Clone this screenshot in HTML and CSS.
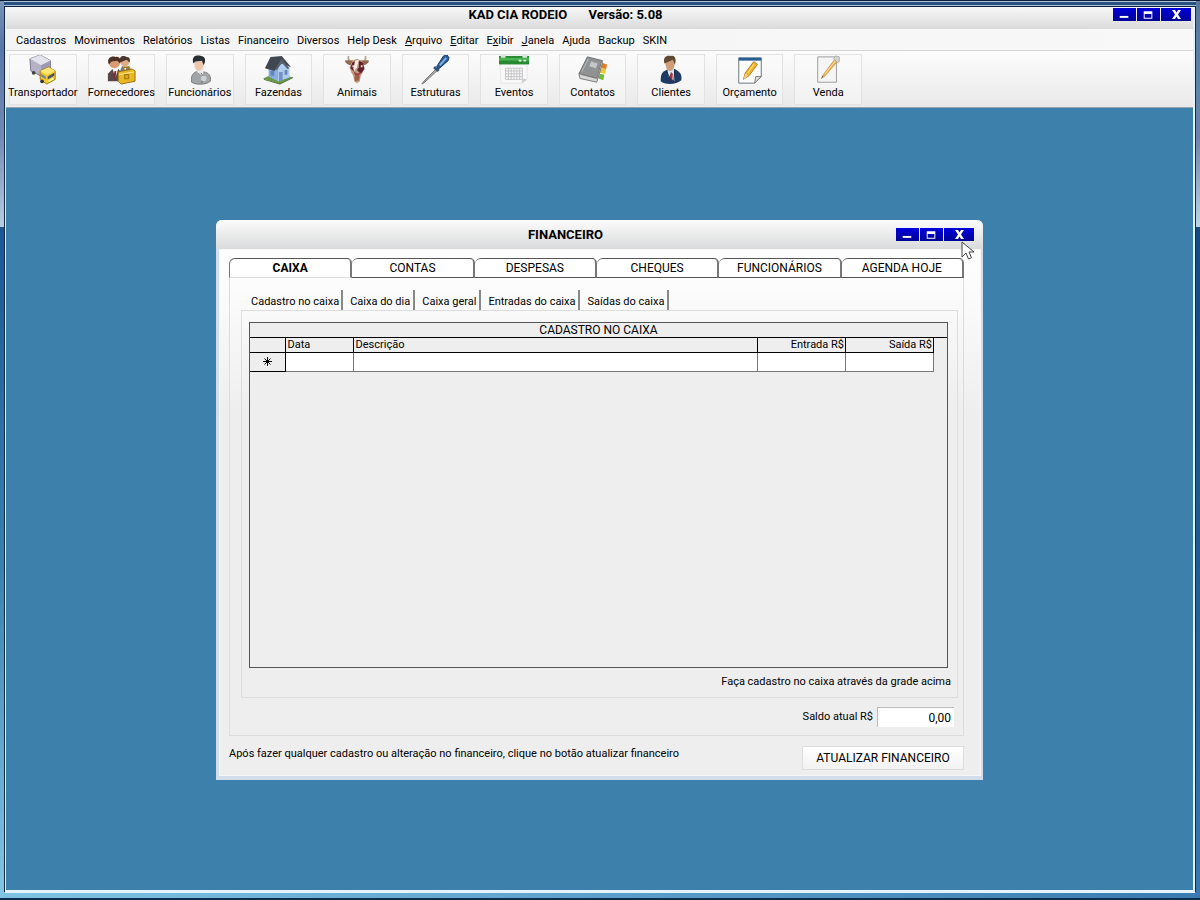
FILE: index.html
```html
<!DOCTYPE html>
<html lang="pt-BR">
<head>
<meta charset="utf-8">
<title>KAD CIA RODEIO</title>
<link rel="stylesheet" href="styles.css">
</head>
<body>
<div class="frame">
<div class="app">
  <header class="titlebar">
    <h1 class="title">KAD CIA RODEIO <span class="version">Versão: 5.08</span></h1>
    <div class="controls">
      <button class="ctl" aria-label="Minimizar"><svg viewBox="0 0 24 13"><path d="M7 8h9v2H7z"/></svg></button>
      <button class="ctl" aria-label="Maximizar"><svg viewBox="0 0 24 13"><path d="M7 3h9v8H7zM8 6v4h7V6z" fill-rule="evenodd"/></svg></button>
      <button class="ctl close" aria-label="Fechar"><svg viewBox="0 0 30 13"><path d="M11 2h3l1.500 2.500L17 2h3l-3 4.500 3 4.500h-3l-1.500-2.500L14 11h-3l3-4.500z"/></svg></button>
    </div>
  </header>
  <nav class="menu">
    <button>Cadastros</button><button>Movimentos</button><button>Relatórios</button><button>Listas</button><button>Financeiro</button><button>Diversos</button><button>Help Desk</button><button><u>A</u>rquivo</button><button><u>E</u>ditar</button><button>E<u>x</u>ibir</button><button><u>J</u>anela</button><button>Ajuda</button><button>Backup</button><button>SKIN</button>
  </nav>
  <div class="tools">
    <div class="toolgrid">
      <button class="tool"><svg viewBox="0 0 32 32"><path d="M2 4 13 0l11 6v12l-9 5L3 17z" fill="#b4b3c6" stroke="#77748a"/><path d="m2 4 11-4 11 6-10 5z" fill="#e2e2ed"/><path d="m14 11 10-5v11l-10 6z" fill="#9a99b0"/><path d="m13 17 9-4 7 4v9l-9 5-7-5z" fill="#f6cb2b" stroke="#9c7309"/><path d="m13 17 9-4 7 4-9 4z" fill="#ffe777"/><path d="m21 23 7-4v3l-7 4z" fill="#465270"/><path d="m14 20 5 3v3l-5-3z" fill="#7888a0"/><circle cx="6" cy="19" r="2" fill="#444"/><circle cx="15" cy="28" r="2" fill="#333"/><path d="m22 28 5-3" stroke="#fff4b0" stroke-width="2"/></svg>Transportador</button>
      <button class="tool"><svg viewBox="0 0 32 32"><circle cx="9" cy="8" r="6" fill="#d99b74"/><path d="M3 10C0 2 7 1 10 2c6-1 6 5 5 7l-3-3-6 1z" fill="#4e3024"/><path d="M2 28v-8l5-5h6l4 4v9z" fill="#58484a"/><path d="m7 15 3 9 3-9z" fill="#fff"/><path d="m9 17-1 7 2 2 1-9z" fill="#8c2530"/><circle cx="20" cy="7" r="5" fill="#e1ac86"/><path d="M15 8C13 1 19 0 22 2c4 0 4 4 3 6l-3-3z" fill="#4b352c"/><path d="m15 17 2-5h7l4 5z" fill="#777"/><path d="m18 12 2 5 3-5z" fill="#fff"/><path d="m13 18 15-3 3 2v11l-15 3-3-3z" fill="#e8b924" stroke="#95700d"/><path d="m14 21 16-3" stroke="#fff099"/><path d="M19 16v-3h6v2M20 21h4v4h-4z" fill="none" stroke="#ac7d0d" stroke-width="1.500"/></svg>Fornecedores</button>
      <button class="tool"><svg viewBox="0 0 32 32"><path d="M7 29c-1-8 2-10 7-12l6 1c6 1 8 5 7 10-4 4-16 4-20 1z" fill="#a2a5a8" stroke="#777"/><path d="M13 14h7l-1 8-6-4z" fill="#eee"/><ellipse cx="15" cy="10" rx="5" ry="7" fill="#ebc8ae"/><path d="M9 9C6 0 14 0 17 1c4 0 6 4 3 10l-2-5-7 1z" fill="#292e32"/><path d="m17 19 2 3-1 8" stroke="#666" fill="none"/><circle cx="20" cy="25" r="3" fill="#ccd0d3"/></svg>Funcionários</button>
      <button class="tool"><svg viewBox="0 0 32 32"><path d="m0 25 14-6 18 5-14 7z" fill="#6c9949"/><path d="m6 14 10-9 12 8v11l-12 4-10-5z" fill="#89aee0"/><path d="M16 14v14l12-4V13l-7-7z" fill="#b0cdef"/><path d="M2 14 8 2l12-1 10 12-10-4-6 6-2 2z" fill="#414751"/><path d="m13 15 7-11 8 10-2 1-6-7-5 8z" fill="#5a626e"/><path d="M8 17h4v5H8zM23 16h3v5h-3z" fill="#6485b8"/><path d="M17 18h4v9l-4 1z" fill="#7592c2"/><path d="m1 26 17 5 14-7" fill="none" stroke="#456e2b"/></svg>Fazendas</button>
      <button class="tool"><svg viewBox="0 0 32 32"><path d="M12 6C8 7 6 5 7 1M20 6c4 1 6-1 5-5" fill="none" stroke="#b9a888" stroke-width="2"/><path d="M3 6c3-1 6 0 9 1l-1 4c-4 0-7-2-8-5zM29 6c-3-1-6 0-9 1l1 4c4 0 7-2 8-5z" fill="#94694f"/><path d="m11 6 5-2 5 2 3 7-2 6-2 3-1 6-3 2-3-2-1-6-2-3-2-6z" fill="#c09a80"/><path d="m11 8 4-2v7l-3 4-3-3zM18 6l4 2 2 7-4 5-4-4 2-3z" fill="#64202a"/><path d="m14 6 4-1-2 8-3 4-1-2z" fill="#f4ece3"/><path d="m12 17 4 3 4-2-2 4h-4z" fill="#a03a3a"/><path d="m13 23 6-1-1 5-4 1z" fill="#996044"/><path d="M11 11h2v2h-2zM20 11h2v2h-2z" fill="#f0d8c8"/></svg>Animais</button>
      <button class="tool"><svg viewBox="0 0 32 32"><path d="m2 31 2-3L17 15l2 1L4 30z" fill="#aaa" stroke="#777"/><path d="m18 12 7-11 4-1 2 3-1 3-9 8-2 1z" fill="#2a5c9d" stroke="#173b70"/><path d="m21 11 7-8" stroke="#80b1e3" stroke-width="2"/><path d="m15 13 5 4" stroke="#3b5372" stroke-width="3"/></svg>Estruturas</button>
      <button class="tool"><svg viewBox="0 0 32 32"><path d="M1 10h29v16l-5 4H2z" fill="#f8f8f8" stroke="#e6e6e6"/><path d="M0 1h32v9H0z" fill="#278a30"/><path d="M0 3h32v3H0z" fill="#4ab353"/><path d="M2 0h5v3H2zM25 0h5v3h-5z" fill="#dbe9db"/><path d="M21 5h3v2h-3zM26 5h3v2h-3z" fill="#d9f5da"/><path d="M7 14h18v12H7zM10 14v12M13 14v12M16 14v12M19 14v12M22 14v12M7 17h18M7 20h18M7 23h18" fill="none" stroke="#c4c4c8"/><path d="m24 30 1-5 5 1z" fill="#ccc"/></svg>Eventos</button>
      <button class="tool"><svg viewBox="0 0 32 32"><path d="m25 8 6 2-1 5-5-1z" fill="#e27c25"/><path d="m24 14 6 1-1 5-6-1z" fill="#e9c936"/><path d="m23 20 5 1-1 6-5-2z" fill="#70ba38"/><path d="m10 2 16 4-5 19L1 20z" fill="#909293" stroke="#65696d"/><path d="m1 20 1 5 18 4 6-20-1-2-5 18z" fill="#d5d5d5" stroke="#777"/><path d="m14 7 7 2-2 5-7-2z" fill="#c5c8ca"/><path d="m4 18 7-14" stroke="#b8bbbc"/></svg>Contatos</button>
      <button class="tool"><svg viewBox="0 0 32 32"><path d="M5 28c0-9 2-10 8-13h7c5 3 8 5 7 12-5 5-18 5-22 1z" fill="#1e3b65"/><path d="m12 14 7 1 1 13-7-5z" fill="#dce6ef"/><ellipse cx="15" cy="9" rx="5" ry="8" fill="#cf9d78"/><path d="M9 9C7 1 12 0 16 1c5-1 6 5 4 9l-2-5z" fill="#5f4932"/><path d="m16 18 2 2-1 10-3-6z" fill="#a23342"/><path d="m11 17 6 12M20 17l-1 11" stroke="#102646"/></svg>Clientes</button>
      <button class="tool"><svg viewBox="0 0 32 32"><path d="M4 3h24v20l-7 7H4z" fill="#fcfcfa" stroke="#66717e"/><path d="M4 3h24v3H4z" fill="#275e96"/><path d="m9 26 2-7 9-12 4 3-9 12z" fill="#efb534" stroke="#b77c1e"/><path d="m9 26 2-6 3 2z" fill="#ead1a6"/><path d="m14 19 6-9" stroke="#ffec86"/><path d="m21 30 1-7h6z" fill="#ddd" stroke="#777"/></svg>Orçamento</button>
      <button class="tool"><svg viewBox="0 0 32 32"><path d="M5 2h20v27H5z" fill="#f5f5f5" stroke="#999"/><path d="m9 25 2-4L23 5l3 2-13 15z" fill="#edb85c" stroke="#cf9443"/><path d="m13 20 11-14" stroke="#ffe29e"/><path d="m22 4 2-3 4 1v5l-2 1z" fill="#d5d5d5" stroke="#aaa"/><path d="m9 25 1-3 1 1z" fill="#555"/></svg>Venda</button>
    </div>
  </div>
  <main class="desktop">
    <section class="window" aria-labelledby="win-title">
      <header class="wintitle">
        <h2 class="title" id="win-title">FINANCEIRO</h2>
        <div class="controls">
          <button class="ctl" aria-label="Minimizar"><svg viewBox="0 0 24 13"><path d="M7 8h9v2H7z"/></svg></button>
          <button class="ctl" aria-label="Maximizar"><svg viewBox="0 0 24 13"><path d="M7 3h9v8H7zM8 6v4h7V6z" fill-rule="evenodd"/></svg></button>
          <button class="ctl close" aria-label="Fechar"><svg viewBox="0 0 30 13"><path d="M11 2h3l1.500 2.500L17 2h3l-3 4.500 3 4.500h-3l-1.500-2.500L14 11h-3l3-4.500z"/></svg></button>
        </div>
      </header>
      <div class="winbody">
        <div class="tabs" role="tablist">
          <button class="tab active" role="tab" aria-selected="true">CAIXA</button><button class="tab" role="tab">CONTAS</button><button class="tab" role="tab">DESPESAS</button><button class="tab" role="tab">CHEQUES</button><button class="tab" role="tab">FUNCIONÁRIOS</button><button class="tab" role="tab">AGENDA HOJE</button>
        </div>
        <div class="panel">
          <div class="subtabs" role="tablist">
            <button class="subtab current" role="tab" aria-selected="true">Cadastro no caixa</button><button class="subtab" role="tab">Caixa do dia</button><button class="subtab" role="tab">Caixa geral</button><button class="subtab" role="tab">Entradas do caixa</button><button class="subtab" role="tab">Saídas do caixa</button>
          </div>
          <div class="subpanel">
            <div class="datagrid">
              <table>
                <colgroup><col class="c-mark"><col class="c-date"><col><col class="c-money"><col class="c-money"></colgroup>
                <caption>CADASTRO NO CAIXA</caption>
                <thead><tr><th></th><th>Data</th><th>Descrição</th><th class="num">Entrada R$</th><th class="num">Saída R$</th></tr></thead>
                <tbody><tr><td class="mark"><svg viewBox="0 0 9 9"><path d="M4.500 0v9M0 4.500h9M1.500 1.500l6 6M7.500 1.500l-6 6"/></svg></td><td></td><td></td><td></td><td></td></tr></tbody>
              </table>
            </div>
            <p class="hint">Faça cadastro no caixa através da grade acima</p>
          </div>
          <div class="balance">
            <label for="saldo">Saldo atual R$</label>
            <input id="saldo" type="text" value="0,00">
          </div>
        </div>
        <footer class="winfoot">
          <p>Após fazer qualquer cadastro ou alteração no financeiro, clique no botão atualizar financeiro</p>
          <button class="update">ATUALIZAR FINANCEIRO</button>
        </footer>
      </div>
      <svg class="cursor" viewBox="0 0 14 20"><path d="M1 1v15l4-4 2.500 6 3-1.200L8 11h5z" fill="#fff" stroke="#444"/></svg>
    </section>
  </main>
</div>
</div>
</body>
</html>
```
FILE: styles.css
```css
* { box-sizing: border-box; }
body {
  margin: 0;
  color: #000;
  font: 11px/14px Roboto, sans-serif;
}
button { padding: 0; border: 0; background: none; color: inherit; font: inherit; white-space: nowrap; }
p, h1, h2 { margin: 0; }

.frame {
  display: flex;
  min-height: 100vh;
  padding: 6px 5px 5px;
  border-top: 1px solid #0a1c36;
  border-bottom: 2px solid #0b2d4b;
  background:
    linear-gradient(#7a93b8, #5b77a5 20%, #7289b4 60%, #b9cde2) left top / 4px 226px no-repeat,
    linear-gradient(#59779c, #5d86a8 40%, #7080ac 60%, #bcd6e4) right top / 4px 226px no-repeat,
    linear-gradient(#1c5794, #3a7fb0 50%, #85c5e4) left bottom / 4px calc(100% - 226px) no-repeat,
    linear-gradient(#144a80, #205c96 50%, #3978b2) right bottom / 4px calc(100% - 226px) no-repeat,
    linear-gradient(#b2c7de 0 1px, #29517f 1px 4px, #a9c0d8 4px 5px, #0d2344 5px) top / 100% 6px no-repeat,
    linear-gradient(90deg, #7fc3e4, #3a7bb0) bottom / 100% 6px no-repeat,
    #102b4d;
}
.app { display: flex; flex: 1; flex-direction: column; border: solid #e4f4fa; border-width: 0 2px 3px 1px; }

.titlebar, .wintitle { display: flex; align-items: flex-start; justify-content: center; position: relative; }
.titlebar { height: 22px; background: linear-gradient(#f8f8f8, #dadada); }
.title { padding-right: 68px; font: bold 13px/15px Roboto, sans-serif; }
.version { margin-left: 18px; }
.controls { position: absolute; right: 2px; top: 1px; display: flex; gap: 1px; }
.ctl { width: 23px; height: 13px; background: linear-gradient(#0000dc, #000096); }
.ctl.close { width: 30px; }
.ctl svg { display: block; width: 100%; height: 13px; fill: #fff; }

.menu { display: flex; gap: 8px; padding: 5px 10px 2px; background: linear-gradient(90deg, #f4f4f4, #f8f8f8); border-bottom: 1px solid #d4d4d4; }
.tools { padding: 3px 4px 2px 3px; background: linear-gradient(#fcfcfc, #e9e9ea); border-bottom: 1px solid #96a3ab; }
.toolgrid { display: grid; grid-template-columns: repeat(11, minmax(0, 1fr)); gap: 11px; max-width: 853px; }
.tool { display: flex; flex-direction: column; align-items: center; gap: 1px; height: 51px; border: 1px solid #e2e2e2; background: linear-gradient(#fbfbfb, #f1f1f1); }
.tool svg { flex: none; width: 30px; height: 30px; }

.desktop { position: relative; flex: 1; min-height: 680px; background: #3d80ab; }
.window {
  position: absolute;
  left: 210px;
  top: 112px;
  width: 767px;
  border-radius: 6px 6px 0 0;
  background: linear-gradient(#fff, #fcfcfc 12%, #eee 35%);
  border: solid #d2dcea;
  border-width: 0 2px 4px 3px;
}
.wintitle { height: 29px; margin: 0 -2px 0 -3px; padding-top: 7px; border-radius: 6px 6px 0 0; background: linear-gradient(#fcfcfc, #d9dadb); }
.wintitle .controls { right: 9px; top: 8px; }
.winbody { padding: 8px 16px 5px 9px; border: 1px solid #f6f6f6; }

.tabs { display: flex; }
.tab { flex: 1; height: 20px; border: 1px solid #555; border-right: 2px solid #777; border-left: 0; border-radius: 6px 5px 0 0; padding-top: 1px; background: #fff; font: 12px/17px Roboto, sans-serif; }
.tab.active { border-left: 1px solid #777; border-bottom-color: #ddd; font-weight: bold; }
.panel { padding: 12px 5px 8px 11px; border: 1px solid #dcdcdf; border-top: 0; }
.subtabs { display: flex; padding-left: 3px; }
.subtab { height: 20px; padding: 3px 3px 0 7px; border-right: 2px solid #888; }
.subtab.current { padding-right: 2px; }
.subpanel { padding: 11px 9px 8px 7px; border: 1px solid #ddd; }
.datagrid { height: 346px; padding-right: 13px; border: 1px solid #555; background: #eee; }
table { width: 100%; border-collapse: collapse; table-layout: fixed; }
caption { margin-right: -13px; height: 15px; border-bottom: 1px solid #000; font: 12px/15px Roboto, sans-serif; }
.c-mark { width: 35px; }
.c-date { width: 68px; }
.c-money { width: 88px; }
th { height: 14px; padding: 0 2px; border: 1px solid #000; border-width: 0 1px 1px 0; background: #eee; font-weight: normal; line-height: 13px; text-align: left; }
th.num { padding: 0 1px; text-align: right; }
td { height: 19px; padding: 0; border: 1px solid #777; border-width: 0 1px 1px 0; background: #fff; }
td.mark { border-color: #000; background: #eee; text-align: center; }
.mark svg { display: block; width: 9px; height: 9px; margin: auto; fill: none; stroke: #000; }
.hint { margin: 7px -3px 0 0; text-align: right; }
.balance { display: flex; align-items: center; justify-content: flex-end; gap: 4px; margin: 9px 4px 0 0; }
.balance input { width: 77px; height: 20px; padding: 0 3px; border: solid #bbb; border-width: 1px 0 0 1px; background: #fff; color: #000; font: 12px/18px Roboto, sans-serif; text-align: right; }
.winfoot { display: flex; justify-content: space-between; align-items: flex-start; padding-top: 10px; }
.winfoot p { padding-top: 1px; }
.update { width: 162px; height: 24px; border: 1px solid #ddd; background: linear-gradient(#fff, #f2f2f2); font: 12px/22px Roboto, sans-serif; }
.cursor { position: absolute; left: 742px; top: 21px; width: 14px; height: 20px; }
```
